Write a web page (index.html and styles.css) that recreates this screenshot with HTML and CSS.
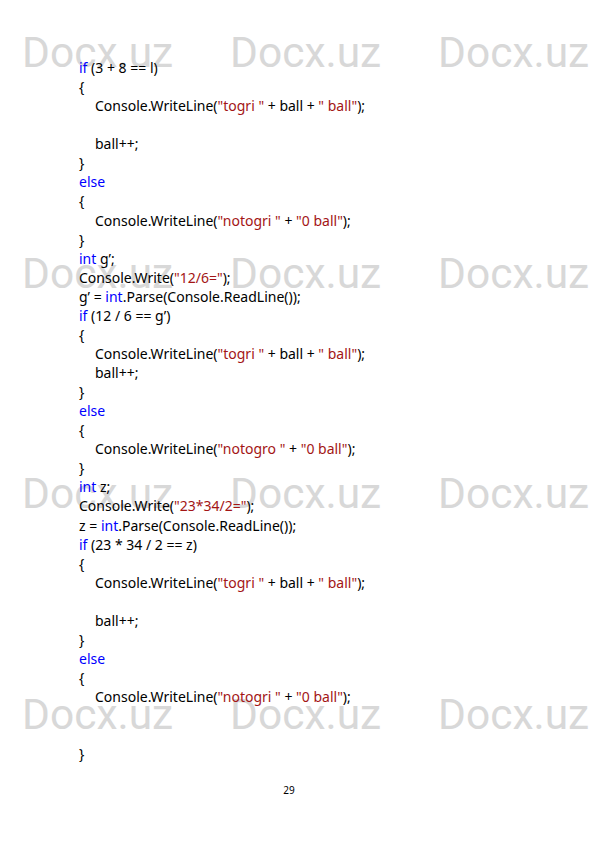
FILE: index.html
```html
<!DOCTYPE html>
<html lang="uz">
<head>
<meta charset="utf-8">
<title>29</title>
<link rel="stylesheet" href="styles.css">
</head>
<body>
<div class="page">
  <div class="watermarks" aria-hidden="true">
    <span class="wm">Docx.uz</span><span class="wm">Docx.uz</span><span class="wm">Docx.uz</span>
    <span class="wm">Docx.uz</span><span class="wm">Docx.uz</span><span class="wm">Docx.uz</span>
    <span class="wm">Docx.uz</span><span class="wm">Docx.uz</span><span class="wm">Docx.uz</span>
    <span class="wm">Docx.uz</span><span class="wm">Docx.uz</span><span class="wm">Docx.uz</span>
  </div>
  <div class="code">
    <div class="ln"><span class="kw">if</span> (3 + 8 == l)</div>
    <div class="ln">{</div>
    <div class="ln ind">Console.WriteLine(<span class="str">"togri "</span> + ball + <span class="str">" ball"</span>);</div>
    <div class="ln blank"></div>
    <div class="ln ind">ball++;</div>
    <div class="ln">}</div>
    <div class="ln"><span class="kw">else</span></div>
    <div class="ln">{</div>
    <div class="ln ind">Console.WriteLine(<span class="str">"notogri "</span> + <span class="str">"0 ball"</span>);</div>
    <div class="ln">}</div>
    <div class="ln"><span class="kw">int</span> g’;</div>
    <div class="ln">Console.Write(<span class="str">"12/6="</span>);</div>
    <div class="ln">g’ = <span class="kw">int</span>.Parse(Console.ReadLine());</div>
    <div class="ln"><span class="kw">if</span> (12 / 6 == g’)</div>
    <div class="ln">{</div>
    <div class="ln ind">Console.WriteLine(<span class="str">"togri "</span> + ball + <span class="str">" ball"</span>);</div>
    <div class="ln ind">ball++;</div>
    <div class="ln">}</div>
    <div class="ln"><span class="kw">else</span></div>
    <div class="ln">{</div>
    <div class="ln ind">Console.WriteLine(<span class="str">"notogro "</span> + <span class="str">"0 ball"</span>);</div>
    <div class="ln">}</div>
    <div class="ln"><span class="kw">int</span> z;</div>
    <div class="ln">Console.Write(<span class="str">"23*34/2="</span>);</div>
    <div class="ln">z = <span class="kw">int</span>.Parse(Console.ReadLine());</div>
    <div class="ln"><span class="kw">if</span> (23 * 34 / 2 == z)</div>
    <div class="ln">{</div>
    <div class="ln ind">Console.WriteLine(<span class="str">"togri "</span> + ball + <span class="str">" ball"</span>);</div>
    <div class="ln blank"></div>
    <div class="ln ind">ball++;</div>
    <div class="ln">}</div>
    <div class="ln"><span class="kw">else</span></div>
    <div class="ln">{</div>
    <div class="ln ind">Console.WriteLine(<span class="str">"notogri "</span> + <span class="str">"0 ball"</span>);</div>
    <div class="ln blank"></div>
    <div class="ln blank"></div>
    <div class="ln">}</div>
  </div>
  <div class="pagenum">29</div>
</div>
</body>
</html>
```

FILE: styles.css
```css
html, body {
  margin: 0;
  padding: 0;
  background: #ffffff;
}

.page {
  position: relative;
  width: 595px;
  height: 842px;
  overflow: hidden;
  box-sizing: border-box;
  padding: 58px 0 0 79px;
}

.watermarks {
  position: absolute;
  top: 32px;
  left: 22px;
  display: grid;
  grid-template-columns: repeat(3, 208px);
  grid-auto-rows: 220.5px;
  font-family: Roboto, "Liberation Sans", sans-serif;
  font-size: 42.5px;
  line-height: 1;
  color: #d8d8d8;
  z-index: 0;
  white-space: nowrap;
}

.code {
  position: relative;
  z-index: 1;
  font-family: "Noto Sans", "Open Sans", sans-serif;
  font-size: 14px;
  line-height: 19.07px;
  color: #000000;
}

.ln {
  height: 19.07px;
  white-space: pre;
}

.ind {
  padding-left: 16px;
}

.kw {
  color: #0000ff;
}

.str {
  color: #a31515;
}

.pagenum {
  position: relative;
  z-index: 1;
  width: 420px;
  margin-top: 20px;
  text-align: center;
  font-family: "Noto Sans", sans-serif;
  font-size: 10px;
  line-height: 14px;
  color: #000000;
}
```
